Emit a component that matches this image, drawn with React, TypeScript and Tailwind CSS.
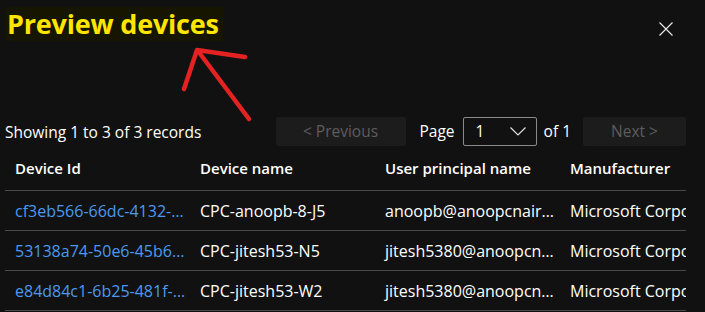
import * as React from 'react';

const rows = [
  {
    id: 'cf3eb566-66dc-4132-9a1e-5c7f0d2b8e41',
    name: 'CPC-anoopb-8-J5',
    upn: 'anoopb@anoopcnairoutlook.onmicrosoft.com',
    maker: 'Microsoft Corporation',
  },
  {
    id: '53138a74-50e6-45b6-8c2d-91fe3a0b7d12',
    name: 'CPC-jitesh53-N5',
    upn: 'jitesh5380@anoopcnairoutlook.onmicrosoft.com',
    maker: 'Microsoft Corporation',
  },
  {
    id: 'e84d84c1-6b25-481f-a3c7-0d9e2f6b4a58',
    name: 'CPC-jitesh53-W2',
    upn: 'jitesh5380@anoopcnairoutlook.onmicrosoft.com',
    maker: 'Microsoft Corporation',
  },
];

const App = () => {
  return (
    <div className="relative h-[312px] w-[705px] overflow-hidden bg-[#111111] font-['Open_Sans',sans-serif] text-white">
      {/* header */}
      <div className="flex items-start justify-between pl-[5px] pr-[32px] pt-[7px]">
        <h1 className="h-[34px] bg-[#151500] pl-[2px] pr-[4px] text-[27px] font-bold leading-[34px] tracking-[-0.2px] text-[#ffe600]">
          Preview devices
        </h1>
        <button className="mt-[15px] flex h-[14px] w-[14px] items-center justify-center">
          <svg width="14" height="14" viewBox="0 0 14 14">
            <path d="M0.5 0.5 L13.5 13.5 M13.5 0.5 L0.5 13.5" stroke="#e6e6e6" strokeWidth="1.2" />
          </svg>
        </button>
      </div>

      {/* toolbar */}
      <div className="mt-[76px] flex h-[29px] items-center pl-[5px] text-[15.5px]">
        <span className="leading-[20px]">Showing 1 to 3 of 3 records</span>
        <button className="ml-auto h-[29px] w-[130px] rounded-[2px] bg-[#1c1c1c] text-[15.5px] text-[#5c5c5c]">
          &lt; Previous
        </button>
        <span className="ml-[14px]">Page</span>
        <div className="ml-[8px] flex h-[29px] w-[74px] items-center justify-between rounded-[2px] border border-[#8a8a8a] pl-[12px] pr-[10px]">
          <span>1</span>
          <svg width="16" height="9" viewBox="0 0 16 9">
            <path d="M0.5 0.5 L8 8 L15.5 0.5" fill="none" stroke="#e0e0e0" strokeWidth="1.2" />
          </svg>
        </div>
        <span className="ml-[7px]">of 1</span>
        <button className="ml-[12px] mr-[19px] h-[29px] w-[103px] rounded-[2px] bg-[#1c1c1c] text-[15.5px] text-[#5c5c5c]">
          Next &gt;
        </button>
      </div>

      {/* table */}
      <div className="ml-[5px] w-[681px] overflow-hidden">
        <div className="w-[780px]">
          <div className="grid h-[45px] grid-cols-[185px_185px_185px_225px] items-center border-b border-[#474747] text-[15px] font-semibold">
            <div className="px-[10px]">Device Id</div>
            <div className="px-[10px]">Device name</div>
            <div className="px-[10px]">User principal name</div>
            <div className="px-[10px]">Manufacturer</div>
          </div>
          {rows.map((row, index) => (
            <div
              key={`row-${index}`}
              className="grid h-[40px] grid-cols-[185px_185px_185px_225px] items-center border-b border-[#474747] text-[16px]"
            >
              <div className="truncate pl-[10px] pr-[3px] text-[#4a9aef]">{row.id}</div>
              <div className="truncate pl-[10px] pr-[3px]">{row.name}</div>
              <div className="truncate pl-[10px] pr-[3px]">{row.upn}</div>
              <div className="whitespace-nowrap px-[10px]">{row.maker}</div>
            </div>
          ))}
        </div>
      </div>

      {/* red annotation arrow */}
      <svg className="pointer-events-none absolute left-0 top-0" width="705" height="312" viewBox="0 0 705 312">
        <path
          d="M184 89 L193 62 L197 50 M197 50 L245 57 M198 51 L249 119"
          fill="none"
          stroke="#e42222"
          strokeWidth="4.5"
          strokeLinecap="round"
          strokeLinejoin="round"
        />
      </svg>
    </div>
  );
};

export default App;
